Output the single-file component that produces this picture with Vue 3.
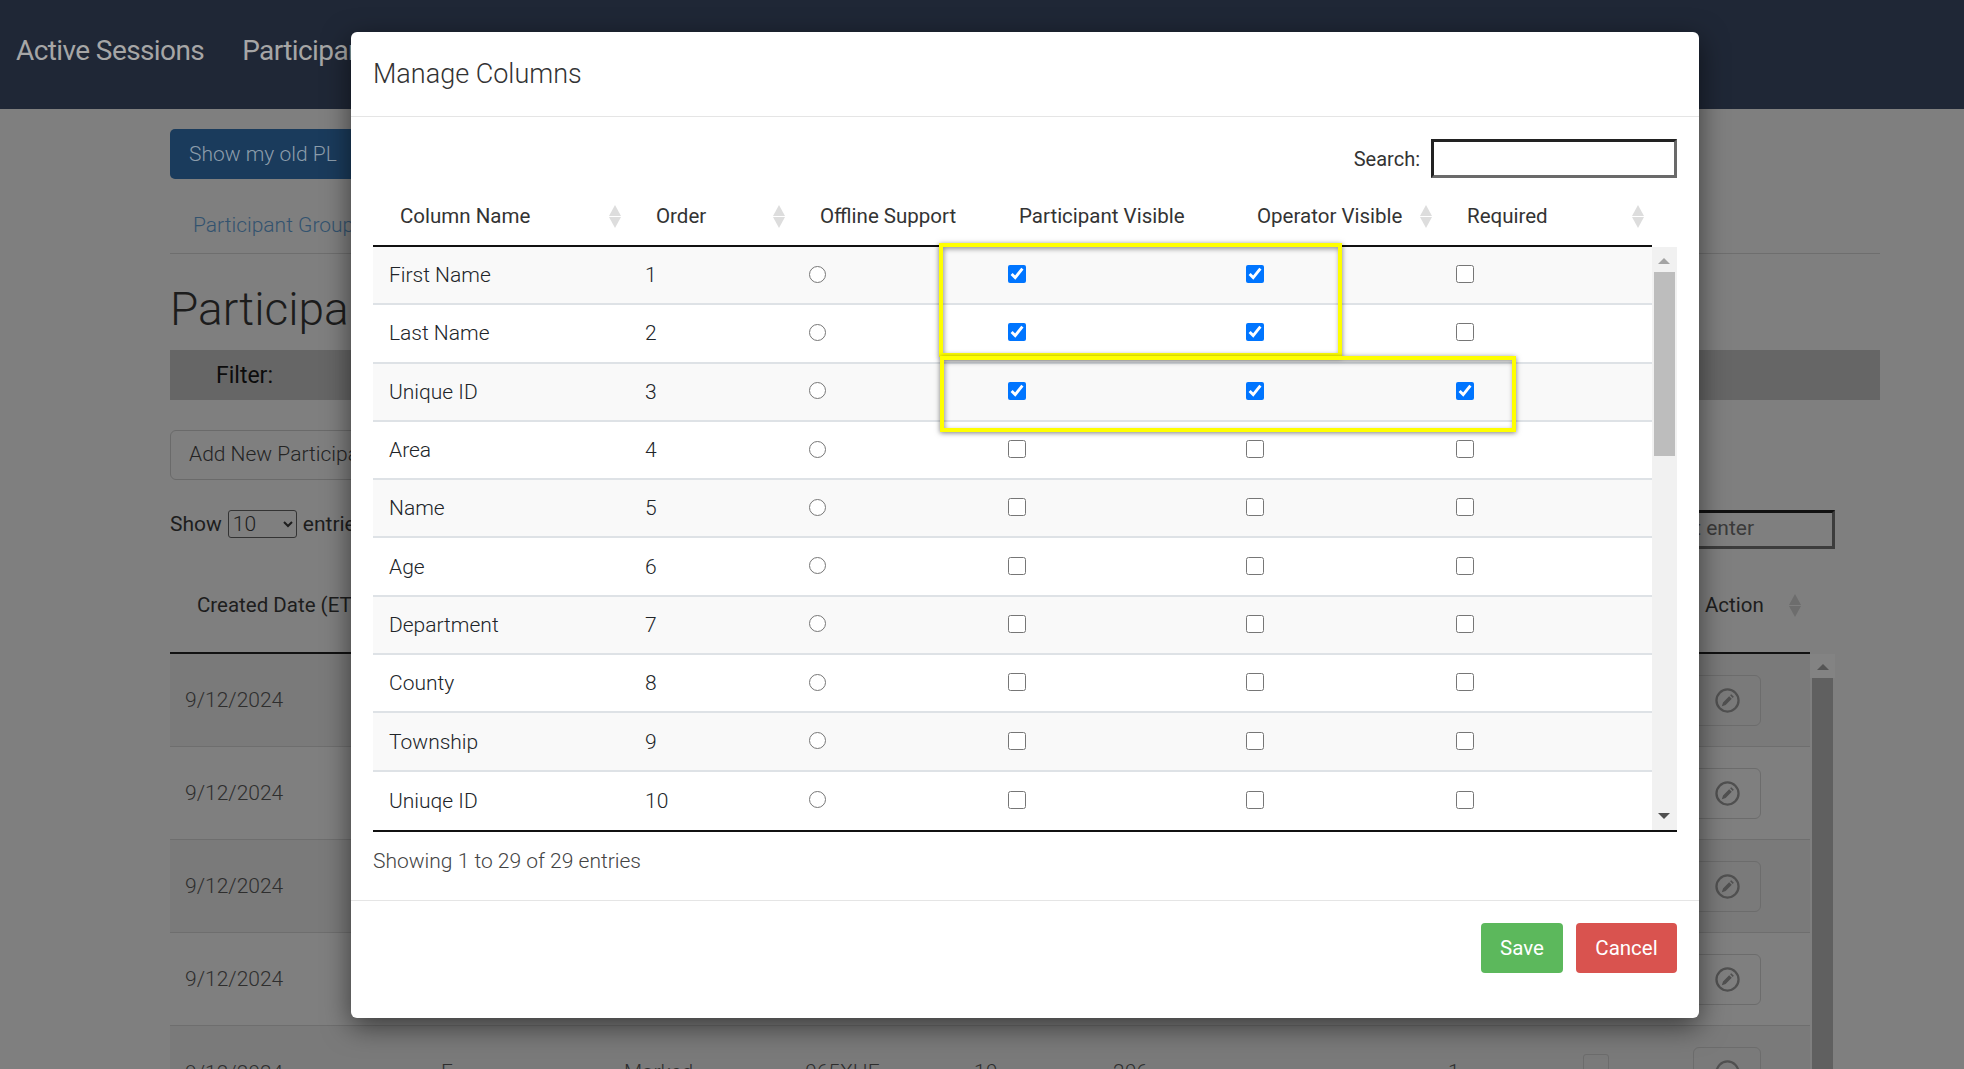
<script setup>
const columns = [
  { label: 'Column Name', sort: true },
  { label: 'Order', sort: true },
  { label: 'Offline Support', sort: false },
  { label: 'Participant Visible', sort: false },
  { label: 'Operator Visible', sort: true },
  { label: 'Required', sort: true }
]
const rows = [
  { name: 'First Name', order: 1, p: true, o: true, r: false },
  { name: 'Last Name', order: 2, p: true, o: true, r: false },
  { name: 'Unique ID', order: 3, p: true, o: true, r: true },
  { name: 'Area', order: 4, p: false, o: false, r: false },
  { name: 'Name', order: 5, p: false, o: false, r: false },
  { name: 'Age', order: 6, p: false, o: false, r: false },
  { name: 'Department', order: 7, p: false, o: false, r: false },
  { name: 'County', order: 8, p: false, o: false, r: false },
  { name: 'Township', order: 9, p: false, o: false, r: false },
  { name: 'Uniuqe ID', order: 10, p: false, o: false, r: false }
]
const bgRows = [1, 2, 3, 4]
</script>

<template>
  <div class="screen">
    <header class="navbar">
      <span>Active Sessions</span>
      <span>Participants</span>
    </header>

    <main class="page">
      <button class="old-btn">Show my old PL</button>
      <nav class="tabs"><span>Participant Groups</span></nav>
      <h1 class="title">Participants</h1>
      <div class="filter"><b>Filter:</b></div>
      <button class="add-btn">Add New Participant</button>

      <div class="tools">
        <div class="show">
          Show
          <select class="select"><option>10</option></select>
          entries
        </div>
        <div class="bg-search">Type and hit enter</div>
      </div>

      <div class="bg-head">
        <span>Created Date (ET)</span>
        <span class="bg-action">Action</span>
        <i class="sort dark"></i>
      </div>

      <div class="bg-body">
        <div class="bg-table">
          <div v-for="n in bgRows" :key="n" class="bg-row">
            <span class="bg-date">9/12/2024</span>
            <span class="bg-btn">
              <svg viewBox="0 0 24 24" width="25" height="25" fill="none">
                <circle cx="12" cy="12" r="10.6" stroke="#505050" stroke-width="2.2" />
                <path d="M6.6 17.4l1.1-3.6 5.9-5.9 2.5 2.5-5.9 5.9zM14.5 7l1.1-1.1 2.5 2.5-1.1 1.1z" fill="#505050" />
              </svg>
            </span>
          </div>
          <div class="bg-row last">
            <span class="bg-date">9/12/2024</span>
            <span class="c1">E</span>
            <span class="c2">Marked</span>
            <span class="c3">065XHE</span>
            <span class="c4">10</span>
            <span class="c5">206</span>
            <span class="c6">1</span>
            <span class="bg-check"></span>
            <span class="bg-btn">
              <svg viewBox="0 0 24 24" width="25" height="25" fill="none">
                <circle cx="12" cy="12" r="10.6" stroke="#505050" stroke-width="2.2" />
              </svg>
            </span>
          </div>
        </div>
        <div class="bg-scroll">
          <div class="bg-up"><i></i></div>
          <div class="bg-thumb"></div>
        </div>
      </div>
    </main>

    <section class="modal">
      <div class="modal-head">Manage Columns</div>

      <div class="modal-body">
        <div class="search-row">
          <label for="col-search">Search:</label>
          <input id="col-search" class="search" type="text" />
        </div>

        <div class="grid thead">
          <div v-for="c in columns" :key="c.label" class="th">
            <span>{{ c.label }}</span>
            <i v-if="c.sort" class="sort"></i>
          </div>
        </div>

        <div class="tbody-wrap">
          <div class="tbody">
            <div v-for="r in rows" :key="r.order" class="grid row">
              <div class="td">{{ r.name }}</div>
              <div class="td">{{ r.order }}</div>
              <div class="td"><input class="radio" type="radio" :name="'off' + r.order" /></div>
              <div class="td"><input class="check" type="checkbox" :checked="r.p" /></div>
              <div class="td"><input class="check" type="checkbox" :checked="r.o" /></div>
              <div class="td"><input class="check" type="checkbox" :checked="r.r" /></div>
            </div>
          </div>
          <div class="scroll">
            <i class="arrow up"></i>
            <div class="thumb"></div>
            <i class="arrow down"></i>
          </div>
        </div>

        <div class="info">Showing 1 to 29 of 29 entries</div>
      </div>

      <div class="modal-foot">
        <button class="btn save">Save</button>
        <button class="btn cancel">Cancel</button>
      </div>

      <div class="mark mark-a"></div>
      <div class="mark mark-b"></div>
    </section>
  </div>
</template>

<style scoped>
.screen {
  position: relative;
  width: 1964px;
  height: 1069px;
  overflow: hidden;
  background: #7f7f7f;
  font-family: Roboto, "Liberation Sans", sans-serif;
  font-size: 21px;
  font-weight: 300;
  color: #222;
}
.navbar {
  height: 109px;
  background: #1f2736;
  color: #a6a6a6;
  font-size: 28px;
  font-weight: 400;
  letter-spacing: -0.6px;
  display: flex;
  align-items: center;
  gap: 38px;
  padding: 0 16px 8px;
  box-sizing: border-box;
}
.page {
  padding: 20px 84px 0 170px;
}
.old-btn {
  display: block;
  width: 220px;
  height: 50px;
  padding: 0 0 0 19px;
  border: 0;
  border-radius: 5px;
  background: #1a3b5c;
  color: #8c9dab;
  font: 300 21px Roboto, sans-serif;
  text-align: left;
}
.tabs {
  height: 75px;
  padding: 29px 0 0 23px;
  box-sizing: border-box;
  border-bottom: 1px solid #6e6e6e;
  color: #33536f;
  line-height: 34px;
}
.title {
  margin: 0;
  height: 96px;
  line-height: 110px;
  font-size: 46px;
  font-weight: 300;
  color: #1c1c1c;
}
.filter {
  height: 50px;
  background: #666;
  padding-left: 46px;
  line-height: 51px;
  font-size: 23px;
}
.filter b {
  font-weight: 400;
  color: #0c0c0c;
}
.add-btn {
  display: block;
  margin-top: 30px;
  width: 260px;
  height: 50px;
  padding: 0 0 2px 18px;
  border: 1px solid #6a6a6a;
  border-radius: 6px;
  background: transparent;
  color: #242424;
  font: 300 21px Roboto, sans-serif;
  text-align: left;
}
.tools {
  margin-top: 30px;
  margin-right: 45px;
  height: 39px;
  display: flex;
  justify-content: space-between;
}
.show {
  display: flex;
  align-items: flex-start;
  gap: 6px;
  font-weight: 400;
  color: #1d1d1d;
  line-height: 28px;
}
.select {
  width: 69px;
  height: 28px;
  background: transparent;
  border: 1px solid #333;
  border-radius: 3px;
  font: 300 21px Roboto, sans-serif;
  color: #1d1d1d;
}
.bg-search {
  width: 400px;
  box-sizing: border-box;
  border: 3px solid #111;
  border-right-color: #3c3c3c;
  border-bottom-color: #3c3c3c;
  padding-right: 78px;
  text-align: right;
  line-height: 31px;
  color: #3a3a3a;
  font-weight: 400;
}
.bg-head {
  position: relative;
  height: 105px;
  width: 1640px;
  box-sizing: border-box;
  padding: 40px 0 0 27px;
  border-bottom: 2px solid #111;
  font-weight: 400;
  font-size: 20.5px;
  color: #1d1d1d;
  line-height: 32px;
}
.bg-action {
  position: absolute;
  left: 1535px;
}
.sort {
  position: absolute;
  right: 7px;
  top: 50%;
  width: 13px;
  height: 23px;
  margin-top: -7px;
}
.sort::before,
.sort::after {
  content: "";
  position: absolute;
  left: 0;
  border-left: 6.5px solid transparent;
  border-right: 6.5px solid transparent;
}
.sort::before {
  top: 0;
  border-bottom: 11px solid #ddd;
}
.sort::after {
  bottom: 0;
  border-top: 11px solid #ddd;
}
.sort.dark {
  left: 1619px;
  right: auto;
  top: 45px;
  margin-top: 0;
}
.sort.dark::before {
  border-bottom-color: #6d6d6d;
}
.sort.dark::after {
  border-top-color: #6d6d6d;
}
.bg-body {
  display: flex;
  width: 1665px;
}
.bg-table {
  width: 1640px;
}
.bg-row {
  position: relative;
  height: 93px;
  box-sizing: border-box;
  border-bottom: 1px solid #6e6e6e;
  display: flex;
  align-items: center;
}
.bg-row:nth-child(odd) {
  background: #7a7a7a;
}
.bg-row:last-child {
  border-bottom: 0;
}
.bg-date {
  margin-left: 15px;
  color: #2e2e2e;
}
.bg-btn {
  position: absolute;
  left: 1523px;
  top: 21px;
  width: 68px;
  height: 51px;
  box-sizing: border-box;
  border: 1px solid #6c6c6c;
  border-radius: 6px;
  display: flex;
  align-items: center;
  justify-content: center;
}
.bg-check {
  position: absolute;
  left: 1413px;
  top: 28px;
  width: 26px;
  height: 26px;
  box-sizing: border-box;
  border: 1px solid #6c6c6c;
  border-radius: 3px;
}
.c1, .c2, .c3, .c4, .c5, .c6 {
  position: absolute;
  top: 34px;
  color: #2e2e2e;
}
.c1 { left: 271px; }
.c2 { left: 454px; }
.c3 { left: 635px; }
.c4 { left: 804px; }
.c5 { left: 943px; }
.c6 { left: 1278px; }
.bg-scroll {
  width: 25px;
}
.bg-up {
  height: 24px;
  background: #838383;
  display: flex;
  justify-content: center;
  padding-top: 10px;
  box-sizing: border-box;
}
.bg-up i {
  width: 0;
  height: 0;
  border-left: 6px solid transparent;
  border-right: 6px solid transparent;
  border-bottom: 6px solid #555;
}
.bg-thumb {
  margin: 0 2px;
  height: 400px;
  background: #606060;
}

.modal {
  position: absolute;
  left: 351px;
  top: 32px;
  width: 1348px;
  height: 986px;
  background: #fff;
  border-radius: 6px;
  box-shadow: 0 8px 28px rgba(0, 0, 0, 0.55);
}
.modal-head {
  height: 85px;
  box-sizing: border-box;
  border-bottom: 1px solid #e5e5e5;
  padding: 0 0 0 22px;
  line-height: 85px;
  font-size: 27px;
  color: #333;
}
.modal-body {
  padding: 22px 22px 0 22px;
}
.search-row {
  display: flex;
  justify-content: flex-end;
  align-items: center;
  gap: 11px;
  height: 39px;
  font-size: 20px;
  font-weight: 400;
  color: #333;
}
.search {
  width: 246px;
  height: 39px;
  box-sizing: border-box;
  border-style: solid;
  border-color: #222 #6a6a6a #6a6a6a #222;
  border-width: 3px;
  background: #fff;
  outline: 0;
}
.grid {
  display: grid;
  grid-template-columns: 256px 164px 199px 238px 210px 212px;
}
.thead {
  width: 1279px;
  height: 69px;
  border-bottom: 2px solid #111;
  box-sizing: border-box;
}
.th {
  position: relative;
  display: flex;
  align-items: center;
  padding-left: 27px;
  padding-top: 8px;
  font-size: 20.5px;
  font-weight: 400;
  color: #333;
}
.tbody-wrap {
  display: flex;
  border-bottom: 2px solid #111;
  width: 1304px;
}
.tbody {
  width: 1279px;
}
.row {
  height: 58.3px;
  box-sizing: border-box;
  border-bottom: 2px solid #dee2e6;
  align-items: center;
}
.row:nth-child(odd) {
  background: #f9f9f9;
}
.row:last-child {
  border-bottom: 0;
}
.td {
  padding-left: 16px;
  color: #212529;
  display: flex;
  align-items: center;
}
.check {
  width: 18px;
  height: 18px;
  margin: 0 0 2px 0;
}
.radio {
  width: 17px;
  height: 17px;
  margin: 0 0 2px 0;
}
.scroll {
  position: relative;
  width: 25px;
  background: #f1f1f1;
}
.thumb {
  position: absolute;
  left: 2px;
  right: 2px;
  top: 25px;
  height: 184px;
  background: #bdbdbd;
}
.arrow {
  position: absolute;
  left: 6px;
  border-left: 6px solid transparent;
  border-right: 6px solid transparent;
}
.arrow.up {
  top: 11px;
  border-bottom: 6px solid #a3a3a3;
}
.arrow.down {
  bottom: 11px;
  border-top: 6px solid #505050;
}
.info {
  height: 68px;
  line-height: 59px;
  color: #444;
}
.modal-foot {
  height: 118px;
  box-sizing: border-box;
  border-top: 1px solid #e5e5e5;
  padding: 22px 22px 0 0;
  display: flex;
  justify-content: flex-end;
  gap: 13px;
}
.btn {
  height: 50px;
  border: 0;
  border-radius: 4px;
  color: #fff;
  font: 400 20.5px Roboto, sans-serif;
}
.save {
  width: 82px;
  background: #5cb85c;
}
.cancel {
  width: 101px;
  background: #d9534f;
}
.mark {
  position: absolute;
  box-sizing: border-box;
  border: 4px solid #ffff00;
  box-shadow: 0 1px 5px rgba(0, 0, 0, 0.5), inset 1px 2px 5px rgba(0, 0, 0, 0.4);
  pointer-events: none;
}
.mark-a {
  left: 588px;
  top: 211px;
  width: 403px;
  height: 114px;
}
.mark-b {
  left: 589px;
  top: 324px;
  width: 576px;
  height: 76px;
}
</style>

<style>
html, body {
  margin: 0;
  overflow: hidden;
  background: #7f7f7f;
}
</style>
